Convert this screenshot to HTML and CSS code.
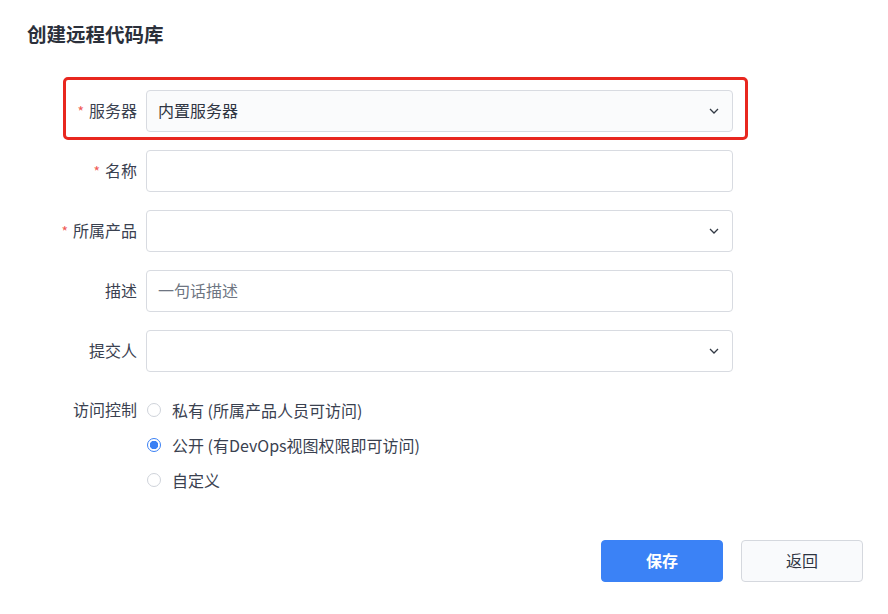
FILE: index.html
```html
<!DOCTYPE html>
<html lang="zh">
<head>
<meta charset="utf-8">
<link rel="stylesheet" href="styles.css">
</head>
<body>
<div class="dialog">
  <h1 class="title">创建远程代码库</h1>
  <div class="form">
    <div class="highlight">
      <div class="row">
        <label class="label"><span class="req">*</span>服务器</label>
        <div class="input select filled">
          <span class="value">内置服务器</span>
          <svg class="chev" width="10" height="6" viewBox="0 0 10 6"><path d="M1 1l4 4 4-4" fill="none" stroke="#333a45" stroke-width="1.3"/></svg>
        </div>
      </div>
    </div>
    <div class="row">
      <label class="label"><span class="req">*</span>名称</label>
      <div class="input"></div>
    </div>
    <div class="row">
      <label class="label"><span class="req">*</span>所属产品</label>
      <div class="input select">
        <span class="value"></span>
        <svg class="chev" width="10" height="6" viewBox="0 0 10 6"><path d="M1 1l4 4 4-4" fill="none" stroke="#333a45" stroke-width="1.3"/></svg>
      </div>
    </div>
    <div class="row">
      <label class="label">描述</label>
      <div class="input"><span class="placeholder">一句话描述</span></div>
    </div>
    <div class="row">
      <label class="label">提交人</label>
      <div class="input select">
        <span class="value"></span>
        <svg class="chev" width="10" height="6" viewBox="0 0 10 6"><path d="M1 1l4 4 4-4" fill="none" stroke="#333a45" stroke-width="1.3"/></svg>
      </div>
    </div>
    <div class="row radios-row">
      <label class="label radio-label">访问控制</label>
      <div class="radios">
        <div class="radio"><span class="dot"></span>私有 (所属产品人员可访问)</div>
        <div class="radio checked"><span class="dot"></span>公开 (有DevOps视图权限即可访问)</div>
        <div class="radio"><span class="dot"></span>自定义</div>
      </div>
    </div>
  </div>
  <div class="actions">
    <button class="btn primary">保存</button>
    <button class="btn">返回</button>
  </div>
</div>
</body>
</html>
```

FILE: styles.css
```css
* { box-sizing: border-box; }
html, body { margin: 0; padding: 0; background: #fff; }
body {
  font-family: "Noto Sans CJK SC", "Noto Sans", sans-serif;
  color: #3a4150;
  width: 888px;
  height: 614px;
  overflow: hidden;
}
.dialog { padding: 18px 0 0 0; }
.title {
  margin: 0 0 0 27px;
  font-size: 19.5px;
  line-height: 32px;
  font-weight: 700;
  color: #2b303b;
}
.form { margin-top: 27px; margin-left: 40px; }
.highlight {
  margin-left: 23px;
  width: 685px;
  border: 3px solid #e8271f;
  border-radius: 5px;
  padding: 10px 0 5px 0;
  margin-bottom: 10px;
}
.highlight .row { margin-bottom: 0; }
.highlight .label { width: 80px; }
.row {
  display: flex;
  align-items: center;
  margin-bottom: 18px;
}
.label {
  width: 106px;
  flex-shrink: 0;
  padding-right: 9px;
  text-align: right;
  font-size: 16px;
  line-height: 22px;
  color: #3a4150;
  white-space: nowrap;
  position: relative;
  top: -1px;
}
.req { color: #f05a55; margin-right: 5px; font-size: 14px; }
.input {
  width: 587px;
  height: 42px;
  border: 1px solid #d8dbe1;
  border-radius: 4px;
  background: #fff;
  display: flex;
  align-items: center;
  padding: 0 12px 0 11px;
  font-size: 16px;
  color: #2f3542;
}
.input .value, .input .placeholder { position: relative; top: -1px; }
.input.filled { background: #fafbfc; }
.select { justify-content: space-between; }
.chev { margin-right: 1px; }
.placeholder { color: #6e7582; }
.radios-row { align-items: flex-start; margin-top: 20px; }
.radio-label { line-height: 35px; top: 0; }
.radios { display: flex; flex-direction: column; }
.radio {
  height: 35px;
  display: flex;
  align-items: center;
  font-size: 16px;
  color: #3a4150;
}
.dot {
  width: 14px;
  height: 14px;
  border: 1px solid #cfd3da;
  border-radius: 50%;
  margin: 0 11px 0 1px;
  background: #fff;
}
.checked .dot {
  border: 1.5px solid #3a80f4;
  background: radial-gradient(circle, #3a80f4 0 4px, #fff 4.5px);
}
.actions {
  display: flex;
  justify-content: flex-end;
  gap: 18px;
  padding-right: 25px;
  margin-top: 43px;
}
.btn {
  width: 122px;
  height: 42px;
  border-radius: 4px;
  border: 1px solid #d5d8de;
  background: #f9fafc;
  font-family: "Noto Sans CJK SC", sans-serif;
  font-size: 16px;
  line-height: 22px;
  padding: 0 0 3px 0;
  color: #2f3542;
}
.btn.primary {
  background: #3b82f6;
  border-color: #3b82f6;
  color: #fff;
  font-weight: 700;
}
```
